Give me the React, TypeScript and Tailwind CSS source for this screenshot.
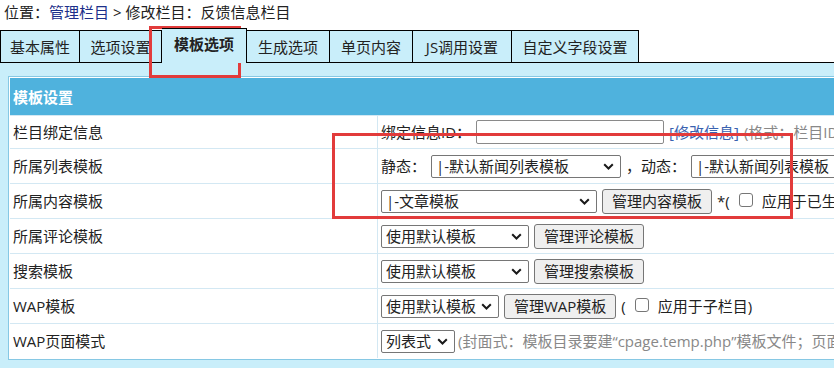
import * as React from "react";

const tabs = [
  { label: "基本属性", w: "w-[80px] border-l" },
  { label: "选项设置", w: "w-[82px]" },
  { label: "模板选项", w: "w-[85px]", active: true },
  { label: "生成选项", w: "w-[83px]" },
  { label: "单页内容", w: "w-[83px]" },
  { label: "JS调用设置", w: "w-[99px]" },
  { label: "自定义字段设置", w: "w-[127px]" },
];

const Chevron = () => (
  <svg width="11" height="7" viewBox="0 0 11 7" className="shrink-0">
    <path d="M1.2 1.2l4.3 4.3 4.3-4.3" fill="none" stroke="#1a1a1a" strokeWidth="2" />
  </svg>
);

const Select = ({ text, w }: { text: string; w: string }) => (
  <div
    className={`flex h-[23px] shrink-0 items-center justify-between rounded-[2px] border border-[#767676] bg-white pl-[4px] pr-[6px] leading-[21px] ${w}`}
  >
    <span className="whitespace-nowrap">{text}</span>
    <Chevron />
  </div>
);

const Button = ({ children }: { children: React.ReactNode }) => (
  <div className="flex h-[25px] shrink-0 items-center rounded-[3px] border border-[#767676] bg-[#efefef] px-[9px] leading-[23px]">
    {children}
  </div>
);

const Check = () => (
  <span className="mx-[9px] -mt-[3px] inline-block h-[14px] w-[14px] shrink-0 rounded-[3px] border border-[#767676] bg-white" />
);

const Row = ({
  label,
  first,
  children,
}: {
  label: string;
  first?: boolean;
  children: React.ReactNode;
}) => (
  <div className={`flex border-t border-[#d3e8f3] ${first ? "h-[33px]" : "h-[35px]"}`}>
    <div className="flex w-[368px] shrink-0 items-center border-r border-[#d3e8f3] pl-[3px]">{label}</div>
    <div className="flex items-center gap-[5px] whitespace-nowrap pl-[3px]">{children}</div>
  </div>
);

const App = () => {
  return (
    <div className="relative h-[368px] w-[834px] overflow-hidden bg-white font-['Open_Sans','Noto_Sans_CJK_SC',sans-serif] text-[15px] leading-[20px] text-[#222]">
      {/* 位置 */}
      <div className="h-[28px] whitespace-nowrap pl-[4px] pt-[2px]">
        位置：<span className="text-[#1c2f8a]">管理栏目</span> &gt; 修改栏目：反馈信息栏目
      </div>

      {/* tabs */}
      <div className="flex h-[35px] items-end border-b border-black">
        {tabs.map((t) =>
          t.active ? (
            <div
              key={t.label}
              className={`relative z-10 -mb-px h-[35px] shrink-0 border-r border-t border-black bg-[#c9eefa] pt-[5px] text-center font-bold ${t.w}`}
            >
              {t.label}
            </div>
          ) : (
            <div
              key={t.label}
              className={`flex h-[32px] shrink-0 items-center justify-center border-r border-t border-black bg-[#c9eefa] ${t.w}`}
            >
              {t.label}
            </div>
          )
        )}
      </div>

      {/* content */}
      <div className="h-[305px] bg-[#c9eefa] pl-[8px] pt-[13px]">
        <div className="w-[1000px] border border-[#86c8e4] bg-white p-px">
          <div className="flex h-[37px] items-center bg-[#4fb2dd] pl-[3px] font-bold text-white">模板设置</div>

          <Row label="栏目绑定信息" first>
            <span>绑定信息ID：</span>
            <div className="h-[24px] w-[188px] rounded-[2px] border border-[#8a8a8a] bg-white" />
            <span className="text-[#3a62b0]">[修改信息]</span>
            <span className="text-[#888]">(格式：栏目ID,信息ID)</span>
          </Row>

          <Row label="所属列表模板">
            <span>静态：</span>
            <Select text="|-默认新闻列表模板" w="w-[190px]" />
            <span>，动态：</span>
            <Select text="|-默认新闻列表模板" w="w-[190px]" />
          </Row>

          <Row label="所属内容模板">
            <Select text="|-文章模板" w="w-[216px]" />
            <Button>管理内容模板</Button>
            <span className="flex items-center">
              *(<Check />应用于已生成的信息)
            </span>
          </Row>

          <Row label="所属评论模板">
            <Select text="使用默认模板" w="w-[148px]" />
            <Button>管理评论模板</Button>
          </Row>

          <Row label="搜索模板">
            <Select text="使用默认模板" w="w-[148px]" />
            <Button>管理搜索模板</Button>
          </Row>

          <Row label="WAP模板">
            <Select text="使用默认模板" w="w-[118px]" />
            <Button>管理WAP模板</Button>
            <span className="flex items-center">
              (<Check />应用于子栏目)
            </span>
          </Row>

          <Row label="WAP页面模式">
            <Select text="列表式" w="w-[74px]" />
            <span className="-ml-[2px] text-[#888]">
              (封面式：模板目录要建“cpage.temp.php”模板文件；页面式：模板目录要建“page.temp.php”模板文件)
            </span>
          </Row>
        </div>
      </div>

      {/* red highlight boxes */}
      <div className="absolute left-[149px] top-[26px] h-[52px] w-[92px] border-[3px] border-[#e23b3b]" />
      <div className="absolute left-[332px] top-[133px] h-[86px] w-[461px] border-[3px] border-[#e23b3b]" />
    </div>
  );
};

export default App;
